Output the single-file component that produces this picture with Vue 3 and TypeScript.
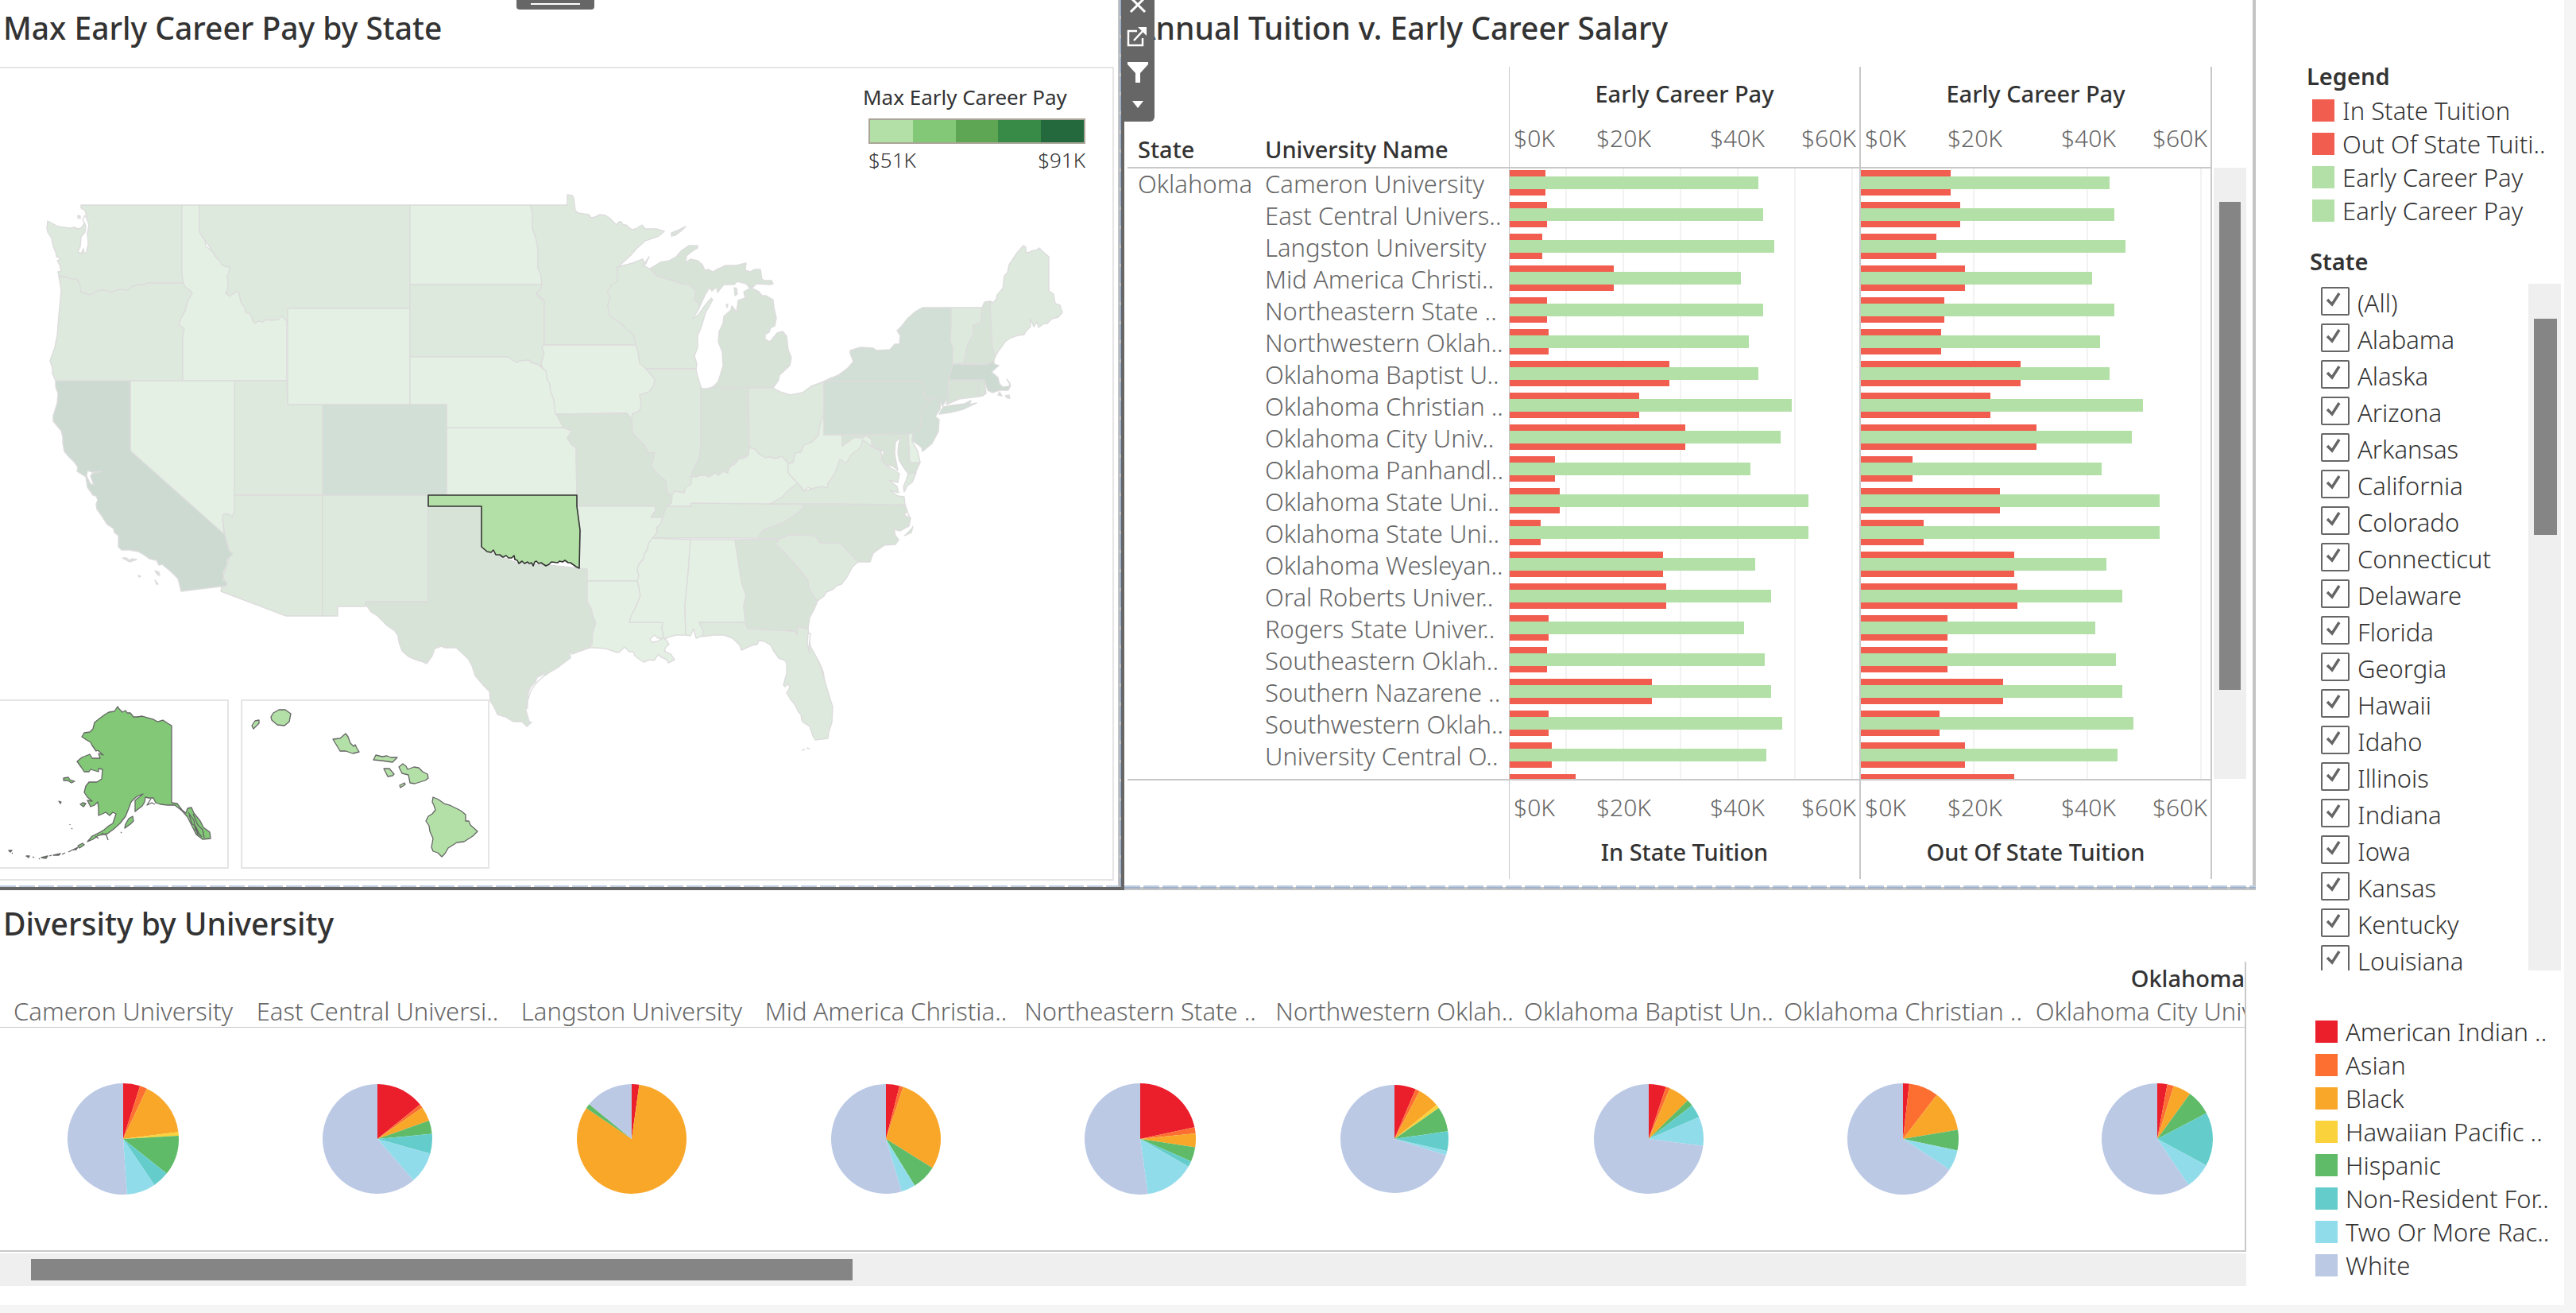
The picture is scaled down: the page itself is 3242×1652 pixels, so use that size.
<script setup lang="ts">
import { ref } from 'vue'

interface Region { id: string; tone: string; d: string }
interface School { name: string; inState: number; outState: number; pay: number }
interface Pie { name: string; radius: number; shares: number[] }

const tones: Record<string, string> = {
  a: '#e5f0e4',
  b: '#dee9dd',
  c: '#d8e3d8',
  d: '#d2dfd6',
  e: '#cddad2',
}

// State outlines in drawing order: simple neighbours first, detailed shared borders on top.
const regions: Region[] = [
  { id: 'MT', tone: 'b', d: '251,258 516,258 516,388 362,388 362,410 320,408 286,372 280,335 251,292' },
  { id: 'WA', tone: 'b', d: '102,258 102,262 107,265 109,271 107,280 102,287 98,288 94,286 88,287 73,285 60,278 59,287 60,292 65,300 67,310 70,317 71,323 77,325 72,328 75,333 77,341 73,342 74,347 85,349 92,352 95,350 100,356 102,368 112,371 118,369 124,365 134,365 138,368 151,364 157,365 161,365 165,361 172,359 174,358 182,358 186,356 232,356 229,346 229,258' },
  { id: 'OR', tone: 'b', d: '74,348 85,349 92,352 95,350 100,356 102,368 112,371 118,369 124,365 134,365 138,368 151,364 157,365 161,365 165,361 172,359 182,358 186,356 232,356 242,369 236,380 234,388 225,409 232,413 230,423 230,479 70,479 66,470 66,463 63,454 69,437 72,422 74,397 76,377 77,365 75,353' },
  { id: 'ID', tone: 'a', d: '229,258 251,258 251,292 258,303 259,310 267,316 271,323 276,328 279,333 285,336 289,335 288,343 286,347 287,362 284,369 289,373 292,370 294,370 297,366 301,370 303,380 308,387 309,393 315,395 318,403 321,407 325,404 331,405 334,402 341,403 351,402 354,397 361,404 361,479 230,479 230,423 232,413 225,409 228,400 233,392 234,388 236,380 242,369 239,365 233,361 231,356 229,346' },
  { id: 'WY', tone: 'a', d: '362,388 516,388 516,509 362,509' },
  { id: 'ND', tone: 'a', d: '516,258 668,258 670,270 670,287 675,302 677,313 677,337 681,347 682,358 516,358' },
  { id: 'SD', tone: 'b', d: '516,358 682,358 681,363 675,369 679,375 685,378 685,434 682,437 685,445 681,457 683,464 678,459 668,456 666,453 654,454 650,456 639,449 516,449' },
  { id: 'NE', tone: 'a', d: '516,449 639,449 650,456 654,454 666,453 668,456 678,459 683,464 687,466 689,478 692,483 693,493 697,503 699,517 703,525 709,538 562,538 562,509 516,509' },
  { id: 'KS', tone: 'a', d: '562,538 709,538 720,542 714,551 719,559 725,563 726,623 562,623' },
  { id: 'UT', tone: 'b', d: '295,479 361,479 362,509 406,509 406,623 295,623' },
  { id: 'NV', tone: 'a', d: '164,479 295,479 295,645 292,650 288,647 281,647 280,653 283,680 164,567' },
  { id: 'AZ', tone: 'b', d: '295,623 406,623 406,775 360,775 278,744 279,738 285,737 281,725 290,697 283,673 280,653 281,647 288,647 292,650 295,645' },
  { id: 'NM', tone: 'b', d: '406,623 539,623 539,757 460,757 460,763 425,763 425,775 406,775' },
  { id: 'CO', tone: 'd', d: '406,509 562,509 562,623 406,623' },
  { id: 'CA', tone: 'e', d: '70,479 164,479 164,567 283,673 288,692 293,697 286,704 285,712 281,720 281,730 286,733 285,737 228,744 224,728 216,720 204,710 200,711 197,705 188,703 181,698 174,694 163,692 153,692 149,688 149,674 144,670 143,665 135,660 128,649 122,641 121,634 123,629 121,624 117,623 110,613 108,600 97,593 98,588 94,582 87,575 81,568 79,557 79,550 77,542 67,530 67,523 72,507 73,495 70,487' },
  { id: 'TX', tone: 'c', d: '539,637 606,637 606,690 622,697 650,708 690,711 729,715 739,716 739,757 744,765 746,774 750,784 746,796 745,806 742,815 725,821 720,823 717,818 718,828 711,833 702,840 690,847 684,850 685,844 681,850 676,852 674,858 668,864 665,871 664,880 662,894 666,908 669,909 663,914 657,908 646,908 636,902 626,899 622,890 617,882 616,870 608,862 598,850 594,838 590,830 583,823 574,815 559,815 556,813 547,816 544,825 537,835 533,833 523,830 514,826 506,819 502,808 501,800 497,794 487,787 475,775 467,770 463,764 460,761 460,757 539,757' },
  { id: 'MN', tone: 'b', d: '668,258 714,258 714,245 720,246 722,249 724,265 728,268 741,270 744,274 749,273 755,270 762,271 767,274 771,278 776,283 779,279 782,279 784,283 788,283 795,289 800,288 808,283 812,288 826,288 836,291 829,297 812,303 801,313 794,321 781,333 777,336 777,354 764,368 768,373 765,383 767,397 782,407 798,422 800,434 685,434 685,378 675,369 681,363 682,358 681,347 677,337 677,313 675,302 670,287 670,270' },
  { id: 'IA', tone: 'a', d: '685,434 800,434 803,443 805,457 812,462 824,477 823,485 817,493 805,497 807,508 805,517 796,521 795,527 789,520 699,521 697,503 693,493 692,483 689,478 687,466 683,464 681,457 685,445 682,437' },
  { id: 'MO', tone: 'c', d: '700,521 789,520 795,527 796,545 812,561 824,570 820,587 838,605 840,620 846,623 845,633 839,637 838,644 834,651 819,651 825,642 824,637 726,637 725,563 719,559 714,551 720,542 709,538' },
  { id: 'AR', tone: 'a', d: '726,637 824,637 825,642 819,651 834,651 831,660 826,664 827,669 822,677 816,684 815,691 811,697 810,703 804,710 802,717 804,724 802,731 739,731 739,716 729,715 730,667' },
  { id: 'LA', tone: 'a', d: '739,731 802,731 804,739 806,749 803,757 799,766 794,776 792,783 834,783 833,791 836,803 840,807 842,811 837,815 837,820 844,823 849,830 841,834 839,830 831,826 829,823 823,831 818,830 810,833 804,829 799,825 797,820 792,820 786,814 780,820 777,821 762,816 750,815 741,815 745,811 746,796 750,784 746,774 744,765 739,757' },
  { id: 'MS', tone: 'a', d: '821,677 869,679 866,720 862,762 863,799 851,799 843,801 836,804 833,791 834,783 792,783 794,776 799,766 803,757 806,749 804,739 802,731 804,724 802,717 804,710 810,703 811,697 815,691 816,684' },
  { id: 'AL', tone: 'a', d: '869,679 925,679 933,732 939,749 936,762 938,783 880,783 885,794 884,800 876,803 873,791 869,800 863,799 862,762 866,720' },
  { id: 'FL', tone: 'b', d: '880,783 938,783 941,791 1001,794 1003,799 1004,788 1017,791 1020,813 1031,833 1036,845 1038,857 1045,880 1048,889 1047,909 1043,921 1042,929 1026,931 1023,926 1019,914 1011,909 1009,906 1008,899 1005,896 1000,886 995,880 990,872 994,865 992,860 988,864 986,862 990,847 990,835 988,831 980,828 973,818 970,812 962,807 955,806 953,811 946,812 933,818 931,812 922,803 911,799 898,799 884,801 885,794' },
  { id: 'GA', tone: 'c', d: '925,679 981,678 976,684 987,695 1003,713 1017,730 1018,739 1024,750 1029,756 1025,766 1019,777 1017,791 1004,788 1003,799 1001,794 941,791 938,783 936,762 939,749 933,732' },
  { id: 'TN', tone: 'b', d: '839,637 870,637 870,633 1012,634 1010,640 1001,648 985,658 971,663 960,667 954,677 822,677 827,669 826,664 831,660 834,651' },
  { id: 'WI', tone: 'b', d: '777,336 796,331 809,326 811,330 808,335 812,335 819,339 822,342 826,347 847,353 858,357 869,358 871,362 876,365 874,377 880,382 880,388 872,401 879,396 886,386 895,375 897,377 891,388 888,393 884,407 882,413 878,422 878,437 874,448 877,458 876,464 813,464 805,457 803,443 800,434 798,422 787,413 782,407 773,401 767,397 765,383 768,373 764,368 770,358 777,354' },
  { id: 'IL', tone: 'b', d: '813,464 876,464 877,470 882,487 882,563 880,577 872,592 870,600 870,609 863,613 861,620 849,618 846,623 840,620 838,605 826,595 820,587 824,570 815,569 812,561 796,545 795,527 796,521 805,517 807,508 805,497 817,493 823,485 824,477' },
  { id: 'IN', tone: 'c', d: '882,487 884,489 890,489 897,487 942,487 942,573 930,577 918,588 916,595 904,598 900,595 893,600 881,598 870,600 872,592 880,577 882,563' },
  { id: 'MIu', tone: 'c', d: '818,338 831,330 842,328 851,323 858,315 867,309 878,309 878,312 870,317 864,322 863,330 869,326 878,328 884,333 887,340 892,339 897,342 902,339 907,337 913,334 927,334 931,333 939,331 938,340 944,342 950,339 957,339 959,351 962,353 971,353 973,357 969,358 952,357 948,361 944,363 939,357 928,354 924,358 911,358 903,368 902,361 896,366 893,362 888,370 880,387 880,382 874,377 876,365 871,362 869,358 858,357 847,353 826,347 822,342' },
  { id: 'MIl', tone: 'c', d: '897,487 904,480 910,460 909,443 904,430 905,417 910,407 911,398 920,390 921,385 925,390 927,393 929,378 938,375 936,367 945,362 955,367 959,372 964,372 973,377 974,387 977,400 975,410 970,412 968,418 963,421 963,427 969,430 978,419 985,417 990,423 992,440 996,450 994,460 981,472 980,478 973,488 942,488' },
  { id: 'isle', tone: 'c', d: '845,297 845,293 855,289 863,285 858,290 850,296' },
  { id: 'OH', tone: 'b', d: '942,488 973,488 982,493 994,497 1010,494 1021,486 1037,480 1037,520 1031,538 1030,548 1022,556 1012,560 1008,569 1001,570 998,582 992,583 984,574 976,577 969,575 963,576 956,572 950,565 943,563' },
  { id: 'KY', tone: 'a', d: '839,637 845,633 846,623 849,618 861,620 863,613 870,609 870,600 876,600 881,598 887,598 893,600 900,595 904,598 910,593 916,595 918,588 925,584 930,577 936,577 942,573 943,563 950,565 956,572 963,576 969,575 976,577 984,574 992,583 992,595 1004,608 991,618 985,625 978,630 969,634 870,633 870,637' },
  { id: 'VA', tone: 'b', d: '1004,608 1012,618 1042,608 1057,578 1086,553 1097,562 1109,568 1110,580 1115,585 1125,591 1132,596 1130,607 1119,604 1129,612 1131,620 1120,617 1130,624 1138,625 1139,635 1012,634 969,634 985,625 991,618' },
  { id: 'WV', tone: 'a', d: '1037,520 1037,547 1060,547 1060,561 1069,555 1076,550 1085,551 1090,548 1097,553 1097,562 1086,553 1083,563 1071,572 1065,583 1057,578 1051,595 1042,608 1041,614 1034,612 1021,615 1017,613 1012,618 1007,611 1004,608 992,595 992,583 998,582 1001,570 1008,569 1012,560 1022,556 1030,548 1031,538' },
  { id: 'MD', tone: 'c', d: '1060,547 1143,546 1145,582 1158,582 1152,595 1143,596 1137,588 1132,580 1130,570 1131,558 1134,550 1127,556 1126,570 1128,582 1130,592 1123,586 1115,585 1109,577 1113,568 1107,566 1099,562 1097,553 1090,548 1085,551 1076,550 1069,555 1060,561' },
  { id: 'DE', tone: 'a', d: '1143,546 1149,544 1148,555 1155,568 1158,582 1145,582' },
  { id: 'shore', tone: 'b', d: '1143,596 1153,595 1148,607 1142,611 1138,619 1137,612 1140,605' },
  { id: 'NC', tone: 'c', d: '1012,634 1139,635 1142,643 1138,648 1146,652 1144,662 1133,668 1125,666 1127,674 1131,679 1127,685 1113,686 1099,696 1095,707 1080,707 1058,684 1032,683 1026,674 994,673 981,678 954,677 960,667 971,663 985,658 1001,648 1010,640' },
  { id: 'SC', tone: 'b', d: '981,678 994,673 1026,674 1032,683 1058,684 1080,707 1073,713 1066,726 1059,735 1053,737 1049,741 1040,745 1037,750 1029,756 1024,750 1018,739 1017,730 1003,713 987,695 976,684' },
  { id: 'NJ', tone: 'd', d: '1162,498 1184,504 1183,515 1177,524 1182,528 1181,543 1173,558 1161,568 1160,563 1148,554 1149,545 1159,538 1159,528 1161,515 1170,505' },
  { id: 'PA', tone: 'd', d: '1037,480 1047,475 1047,479 1159,479 1164,487 1163,498 1171,505 1161,515 1159,528 1159,538 1148,545 1143,546 1037,547' },
  { id: 'NY', tone: 'd', d: '1037,480 1055,472 1067,463 1074,455 1070,445 1070,441 1083,437 1099,438 1103,441 1120,440 1126,433 1132,433 1133,422 1129,416 1135,410 1142,401 1152,392 1161,387 1197,387 1197,407 1196,430 1199,437 1199,458 1194,478 1193,500 1186,511 1184,504 1163,498 1164,487 1159,479 1047,479' },
  { id: 'LI', tone: 'd', d: '1182,521 1187,512 1198,510 1214,508 1222,504 1220,509 1229,507 1212,515 1196,519' },
  { id: 'VT', tone: 'b', d: '1197,387 1236,387 1235,400 1234,407 1225,409 1225,420 1218,433 1213,457 1199,458 1199,437 1196,430 1197,407' },
  { id: 'NH', tone: 'c', d: '1236,387 1239,380 1246,379 1249,438 1253,448 1250,455 1242,459 1213,457 1218,433 1225,420 1225,409 1234,407 1235,400' },
  { id: 'ME', tone: 'b', d: '1246,379 1250,381 1254,376 1255,371 1262,363 1264,347 1268,343 1270,333 1280,318 1288,309 1291,311 1291,317 1294,318 1301,315 1304,315 1308,312 1313,317 1320,323 1320,366 1326,370 1328,382 1334,384 1337,393 1332,399 1324,401 1318,407 1314,407 1307,412 1305,405 1301,411 1297,401 1297,411 1291,417 1289,421 1281,422 1272,425 1265,430 1257,441 1253,448 1249,438' },
  { id: 'CT', tone: 'c', d: '1194,478 1231,478 1231,499 1207,502 1191,509 1193,500' },
  { id: 'RI', tone: 'c', d: '1231,478 1239,478 1241,495 1237,498 1231,499' },
  { id: 'MA', tone: 'e', d: '1199,458 1242,459 1251,453 1251,458 1257,460 1248,468 1256,475 1258,483 1262,487 1270,486 1271,482 1267,477 1272,485 1269,491 1258,491 1249,494 1243,491 1239,478 1194,478' },
]

const oklahoma = '539,623 726,623 726,637 730,667 729,715 725,713 718,708 715,708 711,705 708,707 704,706 702,708 694,707 691,710 687,712 684,710 681,708 678,709 675,706 673,707 671,712 669,708 666,709 664,707 660,709 657,706 653,709 651,705 648,704 647,699 644,702 640,702 637,699 633,701 629,698 624,698 621,692 618,695 613,694 606,688 606,637 539,637'

const alaska = '148,889 150,892 154,896 158,894 160,897 164,897 168,902 173,902 179,901 186,903 193,905 198,908 205,906 211,910 216,913 216,1010 223,1011 229,1019 234,1023 236,1017 241,1016 244,1023 252,1033 256,1041 264,1047 265,1055 255,1056 247,1050 242,1040 239,1034 236,1028 229,1020 220,1013 211,1013 202,1012 196,1010 193,1004 187,1004 183,1003 182,1009 179,1014 170,1021 170,1007 180,999 174,1001 170,1004 165,1009 162,1017 158,1027 151,1036 142,1044 135,1049 124,1051 117,1056 110,1059 116,1052 126,1047 131,1044 137,1039 142,1036 146,1024 142,1022 138,1026 133,1022 129,1024 124,1026 124,1017 123,1009 119,1013 114,1015 110,1007 116,1008 110,1003 106,997 108,989 112,984 122,984 128,980 129,968 124,967 124,971 114,968 112,971 106,971 102,965 97,958 103,953 113,949 116,954 126,954 124,948 130,950 123,944 121,945 116,938 114,934 109,931 103,927 106,922 113,921 117,917 119,909 124,905 132,899 137,896 144,895'

const alaskaIsles = [
  '80,979 86,978 88,981 94,983 90,985 85,982 80,982',
  '101,1012 104,1010 108,1011 105,1015',
  '158,1037 162,1030 167,1027 168,1033 164,1037 157,1042',
  '98,1064 104,1061 106,1063 100,1067',
  '92,1069 98,1066 96,1069',
  '67,1076 76,1074 74,1076',
  '52,1079 60,1077 58,1080',
  '33,1077 37,1077 36,1079',
  '11,1070 15,1070 13,1072',
  '74,1008 77,1009 76,1011',
]

const hawaii = [
  '351,893 359,893 366,898 364,908 358,913 349,912 342,906 341,902 344,897',
  '326,906 326,910 319,917 317,913 321,907',
  '419,930 428,929 435,923 438,927 441,935 445,939 447,937 449,941 452,946 444,948 435,945 428,945',
  '473,950 481,952 487,951 492,953 500,953 494,959 480,957 470,956',
  '483,967 490,967 496,974 494,976 488,977',
  '502,965 507,961 511,964 513,968 521,965 527,966 532,971 538,974 539,979 535,982 522,986 516,985 514,975 506,973',
  '503,988 509,985 510,987 504,991',
  '545,1003 552,1006 559,1011 566,1013 574,1017 580,1020 586,1025 586,1033 590,1033 592,1038 601,1046 595,1052 584,1059 575,1060 564,1067 560,1074 556,1078 551,1073 545,1071 543,1066 545,1055 541,1046 540,1039 536,1033 539,1027 544,1024 548,1019 546,1013 544,1009',
]

const ramp = ['#b3e0a6', '#82c877', '#5ea654', '#388b47', '#24693d']

const schools: School[] = [
  { name: 'Cameron University', inState: 6.3, outState: 15.8, pay: 43.8 },
  { name: 'East Central Univers..', inState: 6.6, outState: 17.5, pay: 44.6 },
  { name: 'Langston University', inState: 5.7, outState: 13.3, pay: 46.6 },
  { name: 'Mid America Christi..', inState: 18.3, outState: 18.3, pay: 40.7 },
  { name: 'Northeastern State ..', inState: 6.6, outState: 14.7, pay: 44.6 },
  { name: 'Northwestern Oklah..', inState: 6.9, outState: 14.1, pay: 42.1 },
  { name: 'Oklahoma Baptist U..', inState: 28.1, outState: 28.1, pay: 43.8 },
  { name: 'Oklahoma Christian ..', inState: 22.8, outState: 22.8, pay: 49.7 },
  { name: 'Oklahoma City Univ..', inState: 30.9, outState: 30.9, pay: 47.7 },
  { name: 'Oklahoma Panhandl..', inState: 8, outState: 9.1, pay: 42.4 },
  { name: 'Oklahoma State Uni..', inState: 8.8, outState: 24.5, pay: 52.7 },
  { name: 'Oklahoma State Uni..', inState: 5.5, outState: 11, pay: 52.7 },
  { name: 'Oklahoma Wesleyan..', inState: 27, outState: 27, pay: 43.2 },
  { name: 'Oral Roberts Univer..', inState: 27.6, outState: 27.6, pay: 46 },
  { name: 'Rogers State Univer..', inState: 6.9, outState: 15.2, pay: 41.3 },
  { name: 'Southeastern Oklah..', inState: 6.6, outState: 15.2, pay: 44.9 },
  { name: 'Southern Nazarene ..', inState: 25, outState: 25, pay: 46 },
  { name: 'Southwestern Oklah..', inState: 6.9, outState: 13.8, pay: 48 },
  { name: 'University Central O..', inState: 7.4, outState: 18.3, pay: 45.2 },
  { name: '', inState: 11.6, outState: 27, pay: 0 },
]

const axisMax = 61.6
const barWidth = (thousands: number) => `${((thousands / axisMax) * 100).toFixed(2)}%`

const measures = [
  { label: 'In State Tuition', color: '#f15d4f' },
  { label: 'Out Of State Tuiti..', color: '#f15d4f' },
  { label: 'Early Career Pay', color: '#b3e0a6' },
  { label: 'Early Career Pay', color: '#b3e0a6' },
]

const filters = ref(
  ['(All)', 'Alabama', 'Alaska', 'Arizona', 'Arkansas', 'California', 'Colorado', 'Connecticut', 'Delaware', 'Florida',
    'Georgia', 'Hawaii', 'Idaho', 'Illinois', 'Indiana', 'Iowa', 'Kansas', 'Kentucky', 'Louisiana']
    .map((name) => ({ name, on: true })),
)

const groups = [
  { label: 'American Indian ..', color: '#eb1e2c' },
  { label: 'Asian', color: '#fd6f30' },
  { label: 'Black', color: '#f9a729' },
  { label: 'Hawaiian Pacific ..', color: '#f9d23c' },
  { label: 'Hispanic', color: '#5fbb68' },
  { label: 'Non-Resident For..', color: '#64cdcc' },
  { label: 'Two Or More Rac..', color: '#91dcea' },
  { label: 'White', color: '#bbc9e5' },
]

const pies: Pie[] = [
  { name: 'Cameron University', radius: 70, shares: [4.9, 2.1, 16, 1.1, 11.6, 4.8, 8.4, 51.1] },
  { name: 'East Central Universi..', radius: 69, shares: [14.2, 1.1, 4.3, 0, 3.9, 5.8, 9.3, 61.4] },
  { name: 'Langston University', radius: 69, shares: [2.2, 0, 82.3, 0, 1.4, 0, 0, 14.1] },
  { name: 'Mid America Christia..', radius: 69, shares: [4, 1.1, 28.8, 0, 7.3, 0, 4.2, 54.6] },
  { name: 'Northeastern State ..', radius: 70, shares: [21.6, 1.8, 4, 0, 4.2, 1.7, 14.5, 52.2] },
  { name: 'Northwestern Oklah..', radius: 68, shares: [6.4, 1.3, 6.5, 1.1, 7.4, 5.9, 1.3, 70.1] },
  { name: 'Oklahoma Baptist Un..', radius: 69, shares: [5.1, 1.2, 6.3, 0, 1.9, 4, 8.5, 73] },
  { name: 'Oklahoma Christian ..', radius: 70, shares: [1.8, 8.6, 12, 0, 5.9, 0, 6, 65.7] },
  { name: 'Oklahoma City Unive..', radius: 70, shares: [2.9, 1.9, 5.2, 0, 7.3, 15.6, 7.6, 59.5] },
]

function slices(pie: Pie) {
  const point = (share: number) => {
    const angle = (share / 100) * 2 * Math.PI
    return `${(pie.radius * Math.sin(angle)).toFixed(2)} ${(-pie.radius * Math.cos(angle)).toFixed(2)}`
  }
  let start = 0
  return pie.shares.map((share, i) => {
    const end = start + share
    const d = `M0 0L${point(start)}A${pie.radius} ${pie.radius} 0 ${share > 50 ? 1 : 0} 1 ${point(end)}Z`
    start = end
    return { d, color: groups[i].color, share }
  }).filter((s) => s.share > 0)
}
</script>

<template>
  <main class="dashboard">
    <div class="sheets">
      <section class="panel map-panel">
        <h2 class="title">Max Early Career Pay by State</h2>
        <svg class="map" viewBox="0 84 1402 1024" role="img" aria-label="Map of maximum early career pay">
          <path class="frame" d="M0 85H1401V1107H0" />
          <g class="faded">
            <polygon v-for="r in regions" :key="r.id" :points="r.d" :fill="tones[r.tone]" />
            <path fill="#fff" d="M107 271l-3 5 4 8-1 8-5 6-1 12-3 7 4 2 3-6 1 6 3-2 2-10-1-14 2-10-3-8zM110 592l6 2 12-1-12 3-2 3 4 11-4-1-5-10zM818 804l6-5 4 4 6 0-7 4-7 1zM1020 797l-3 0-1 14 3 12-1-9z" />
            <path fill="#d8e3d8" d="M98 271l3 1 0 3-3-1zM154 702l5 0 4 3 3-2 6 1-9 3zM195 718l5 2 1 4-3-1zM195 730l4 5-2 0zM174 724l3 1-2 1zM924 362l3 1 1 7-3 2zM914 383l2 0-1 4zM811 332l6-9-4 8-2 3zM1256 497l2-4 3 5zM1265 498l5-1 1 4-3 0zM1009 944l4-1M1015 941l4 1M1139 637l7 16M1149 662l-2 8-9 4" />
            <path fill="none" d="M690 847q-22 14-25 33M664 870l0 22M1032 836l5 18" />
          </g>
          <polygon class="selected" :points="oklahoma" />
          <path class="inset" d="M0 881H287V1092H0M304 881H615V1092H304Z" />
          <g class="isles">
            <polygon :points="alaska" fill="#82c877" />
            <polygon v-for="d in alaskaIsles" :key="d" :points="d" fill="#82c877" />
            <path fill="none" d="M238 1025l4 12 4 2 3 12M237 1022l7 10 2 12 8 9M243 1024l6 14 6 6 2 10M247 1041l5 11M190 1005l-5 8 6-3 4 2M92 1069l-6 3M82 1073l-4 2M65 1076l-3 1M50 1080l-1 1M41 1078l2 1M128 1048l6 3 2 6M120 1052l4 3M15 1073l1 1M88 1037l0 1M90 1042l1 1M152 1047l1 1" />
            <polygon v-for="d in hawaii" :key="d" :points="d" fill="#b3e0a6" />
          </g>
        </svg>
        <div class="ramp-legend">
          <h3>Max Early Career Pay</h3>
          <div class="ramp"><span v-for="c in ramp" :key="c" :style="{ background: c }"></span></div>
          <div class="ramp-ends"><span>$51K</span><span>$91K</span></div>
        </div>
        <div class="grip"><i></i></div>
      </section>

      <section class="panel chart-panel">
        <h2 class="title">Annual Tuition v. Early Career Salary</h2>
        <div class="chart">
          <table>
            <thead>
              <tr>
                <th class="state">State</th>
                <th class="school">University Name</th>
                <th v-for="n in 2" :key="n" class="axis">
                  <span class="axis-name">Early Career Pay</span>
                  <span class="ticks"><span>$0K</span><span>$20K</span><span>$40K</span><span>$60K</span></span>
                </th>
              </tr>
            </thead>
            <tbody>
              <tr v-for="(s, i) in schools" :key="i">
                <td class="state">{{ i === 0 ? 'Oklahoma' : '' }}</td>
                <td class="school">{{ s.name }}</td>
                <td class="plot tens">
                  <i class="tuition" :style="{ width: barWidth(s.inState) }"></i>
                  <i class="pay" :style="{ width: barWidth(s.pay) }"></i>
                </td>
                <td class="plot twenties">
                  <i class="tuition" :style="{ width: barWidth(s.outState) }"></i>
                  <i class="pay" :style="{ width: barWidth(s.pay) }"></i>
                </td>
              </tr>
            </tbody>
            <tfoot>
              <tr>
                <th class="state"></th>
                <th class="school"></th>
                <th v-for="name in ['In State Tuition', 'Out Of State Tuition']" :key="name" class="axis">
                  <span class="ticks"><span>$0K</span><span>$20K</span><span>$40K</span><span>$60K</span></span>
                  <span class="axis-name strong">{{ name }}</span>
                </th>
              </tr>
            </tfoot>
          </table>
          <div class="track chart-track"><div class="thumb"></div></div>
        </div>
        <div class="toolbar">
          <button type="button" aria-label="Remove">
            <svg viewBox="0 0 42 18"><path d="M12-3L30 15M30-3L12 15" fill="none" stroke="#fff" stroke-width="3" /></svg>
          </button>
          <button type="button" aria-label="Go to sheet">
            <svg viewBox="0 0 42 48"><path d="M20 21H9V39H27V30M16 33L29 19" fill="none" stroke="#fff" stroke-width="2.5" /><path d="M21 16H32V27Z" fill="#fff" /></svg>
          </button>
          <button type="button" aria-label="Use as filter">
            <svg viewBox="0 0 42 48"><path d="M8 12H34V15L24 26V38H18V26L8 15Z" fill="#fff" /></svg>
          </button>
          <button type="button" aria-label="More options">
            <svg viewBox="0 0 42 39"><path d="M14 13H28L21 22Z" fill="#fff" /></svg>
          </button>
        </div>
      </section>

      <section class="diversity">
        <h2 class="title">Diversity by University</h2>
        <div class="pies">
          <div class="pies-state">Oklahoma</div>
          <div class="pies-row">
            <figure v-for="p in pies" :key="p.name">
              <figcaption>{{ p.name }}</figcaption>
              <svg viewBox="-70 -70 140 140"><path v-for="s in slices(p)" :key="s.color" :d="s.d" :fill="s.color" /></svg>
            </figure>
          </div>
        </div>
        <div class="track pies-track"><div class="thumb"></div></div>
      </section>
    </div>

    <aside class="side">
      <section class="legend">
        <h3>Legend</h3>
        <ul><li v-for="(m, i) in measures" :key="i"><i :style="{ background: m.color }"></i>{{ m.label }}</li></ul>
      </section>
      <section class="filter">
        <h3>State</h3>
        <div class="filter-body">
          <div class="filter-list">
            <label v-for="f in filters" :key="f.name">
              <input v-model="f.on" type="checkbox" />
              <span>{{ f.name }}</span>
            </label>
          </div>
          <div class="track filter-track"><div class="thumb"></div></div>
        </div>
      </section>
      <section class="legend groups">
        <ul><li v-for="g in groups" :key="g.label"><i :style="{ background: g.color }"></i>{{ g.label }}</li></ul>
      </section>
    </aside>
  </main>
</template>

<style>
body {
  margin: 0;
  background: #f5f5f5;
  overflow: hidden;
}
</style>

<style scoped>
.dashboard {
  display: grid;
  grid-template-columns: 1fr 388px;
  margin: 0 15px 10px 0;
  background: #fff;
  color: #333;
  font: 300 31px/40px 'Noto Sans', 'Open Sans', sans-serif;
  overflow: hidden;
}
.dashboard * { box-sizing: border-box; }
h2, h3, ul, figure { margin: 0; padding: 0; }
ul { list-style: none; }
.sheets {
  display: grid;
  grid-template-columns: 1415fr 1424fr;
  grid-template-rows: auto auto;
  min-width: 0;
}
.title {
  height: 84px;
  padding-left: 4px;
  font-size: 39px;
  font-weight: 500;
  line-height: 70px;
  white-space: nowrap;
}
.panel { position: relative; min-width: 0; }

/* Map sheet */
.map-panel {
  padding: 0 9px 8px 0;
  border-right: 4px solid #666;
  border-bottom: 4px solid #666;
}
.map-panel::before {
  content: '';
  position: absolute;
  inset: 0;
  pointer-events: none;
  background:
    repeating-linear-gradient(to bottom, #9fb0c9 0 20px, #c4c4c4 20px 24px) right top / 2px 100% no-repeat,
    linear-gradient(#c4c4c4, #c4c4c4) right 2px top / 2px 100% no-repeat,
    repeating-linear-gradient(to right, #bfcde0 0 20px, #fff 20px 24px) left bottom / 100% 2px no-repeat;
}
.map { display: block; width: 100%; height: auto; }
.frame, .inset { fill: none; stroke: #e5e5e5; stroke-width: 2; }
.inset { fill: #fff; }
.faded { stroke: #dcdcdc; stroke-width: 1.4; stroke-linejoin: round; }
.selected { fill: #b3e0a6; stroke: #333; stroke-width: 1.6; stroke-linejoin: round; }
.isles { stroke: #666; stroke-width: 1.3; stroke-linejoin: round; }
.ramp-legend {
  position: absolute;
  top: 102px;
  right: 45px;
  width: 280px;
  font-size: 26px;
}
.ramp-legend h3 { font-size: 26px; font-weight: 400; line-height: 40px; white-space: nowrap; }
.ramp {
  display: flex;
  height: 32px;
  margin: 7px 0 0 7px;
  border: 2px solid #aaa598;
}
.ramp span { flex: 1; }
.ramp-ends { display: flex; justify-content: space-between; margin-left: 7px; }
.grip {
  position: absolute;
  top: 0;
  left: 650px;
  width: 98px;
  height: 12px;
  padding-top: 4px;
  border-radius: 0 0 4px 4px;
  background: #666;
}
.grip i { display: block; height: 2px; margin: 0 18px; background: #fff; }

/* Tuition chart */
.chart-panel { padding-bottom: 14px; border-right: 4px solid #c4c4c4; }
.chart-panel::after {
  content: '';
  position: absolute;
  left: 0;
  right: -4px;
  bottom: 0;
  height: 6px;
  background:
    repeating-linear-gradient(to right, #bfcde0 0 20px, #fff 20px 24px) left top / 100% 2px no-repeat,
    repeating-linear-gradient(to right, #9fb0c9 0 20px, #c4c4c4 20px 24px) left 2px / 100% 2px no-repeat,
    #c4c4c4;
}
.chart-panel .title { padding-left: 14px; }
.chart { display: flex; padding-right: 8px; }
table { display: block; flex: 1; margin-left: 4px; color: #666; }
thead, tfoot { display: block; }
tbody { display: block; position: relative; height: 770px; overflow: hidden; }
tbody::before {
  content: '';
  position: absolute;
  inset: 0 0 auto;
  height: 2px;
  background: #c8c8c8;
}
tfoot { border-top: 2px solid #c8c8c8; }
tr { display: grid; grid-template-columns: 173px 308px 1fr 1fr; }
th, td { padding: 0; text-align: left; font-weight: 300; white-space: nowrap; }
.state { padding-left: 13px; }
.school { border-right: 1px solid #c8c8c8; }
thead th.state, thead th.school { height: 126px; padding-top: 84px; color: #333; font-size: 29px; font-weight: 500; }
.axis { height: 126px; padding-top: 14px; border-right: 2px solid #c8c8c8; }
tfoot .axis, tfoot .school { height: 124px; }
.axis-name { display: block; text-align: center; color: #333; font-size: 29px; font-weight: 500; }
.axis-name.strong { margin-top: 16px; }
.ticks {
  display: grid;
  grid-template-columns: 67px 143px 143px 1fr;
  margin-top: 16px;
  padding: 0 4px 0 5px;
  font-size: 30px;
}
.ticks span:nth-child(2), .ticks span:nth-child(3) { text-align: center; }
.ticks span:last-child { justify-self: end; }
tfoot .ticks { margin-top: 0; }
tbody td { height: 40px; line-height: 42px; }
.plot { display: grid; align-items: center; border-right: 2px solid #c8c8c8; }
.tens { background: repeating-linear-gradient(to right, transparent 0 70px, #f2f2f2 70px 72px); }
.twenties { background: repeating-linear-gradient(to right, transparent 0 141px, #f2f2f2 141px 143px); }
.plot i { grid-area: 1 / 1; }
.tuition { height: 32px; background: #f15d4f; }
.pay { height: 16px; background: #b3e0a6; }

.track { background: #efefef; }
.thumb { background: #858585; }
.chart-track { width: 41px; height: 769px; margin: 127px 0 0 2px; padding: 43px 7px 0; }
.chart-track .thumb { height: 614px; }

.toolbar {
  position: absolute;
  top: 0;
  left: -4px;
  width: 42px;
  border-radius: 0 0 6px 0;
  background: #666;
}
.toolbar button { display: block; width: 42px; padding: 0; border: 0; background: none; }
.toolbar svg { display: block; width: 42px; }

/* Diversity sheet */
.diversity { grid-column: 1 / -1; min-width: 0; padding: 0 12px 24px 0; }
.diversity .title { height: 90px; line-height: 84px; }
.pies { border-right: 2px solid #c8c8c8; border-bottom: 2px solid #c8c8c8; overflow: hidden; }
.pies-state { height: 42px; line-height: 42px; text-align: right; font-size: 29px; font-weight: 500; }
.pies-row { display: flex; margin-left: -5px; }
figure { flex: 0 0 320px; color: #666; text-align: center; }
figcaption { height: 41px; border-bottom: 1px solid #c8c8c8; white-space: nowrap; }
figure svg { display: block; width: 140px; height: 140px; margin: 70px auto; }
.pies-track { height: 41px; margin-top: 2px; padding: 7px 0 7px 39px; }
.pies-track .thumb { width: 1034px; height: 27px; }

/* Side column */
.side { padding-top: 76px; }
.side h3 { font-size: 29px; font-weight: 600; line-height: 40px; }
.legend { padding-left: 71px; }
.legend h3 { margin: 0 0 2px -7px; }
.legend li { display: flex; align-items: center; gap: 10px; height: 42px; white-space: nowrap; }
.legend i { width: 28px; height: 28px; }
.filter { padding: 23px 4px 0 68px; }
.filter-body { display: flex; height: 865px; margin-top: 7px; overflow: hidden; }
.filter-list { flex: 1; padding-left: 14px; }
.filter label { display: flex; align-items: center; gap: 10px; height: 46px; }
.filter label span { padding-top: 4px; }
.filter input {
  appearance: none;
  width: 36px;
  height: 36px;
  margin: 0;
  border: 2px solid #666;
  border-radius: 2px;
  background: #fff;
}
.filter input:checked {
  background: url("data:image/svg+xml,%3Csvg xmlns='http://www.w3.org/2000/svg' viewBox='0 0 32 32'%3E%3Cpath d='M6 14l6 6L21 6' fill='none' stroke='%23666' stroke-width='3.5'/%3E%3C/svg%3E") center / 32px 32px no-repeat;
}
.filter-track { width: 41px; margin-top: 1px; padding: 44px 5px 0 7px; }
.filter-track .thumb { height: 272px; }
.groups { padding: 56px 0 0 75px; }
</style>
